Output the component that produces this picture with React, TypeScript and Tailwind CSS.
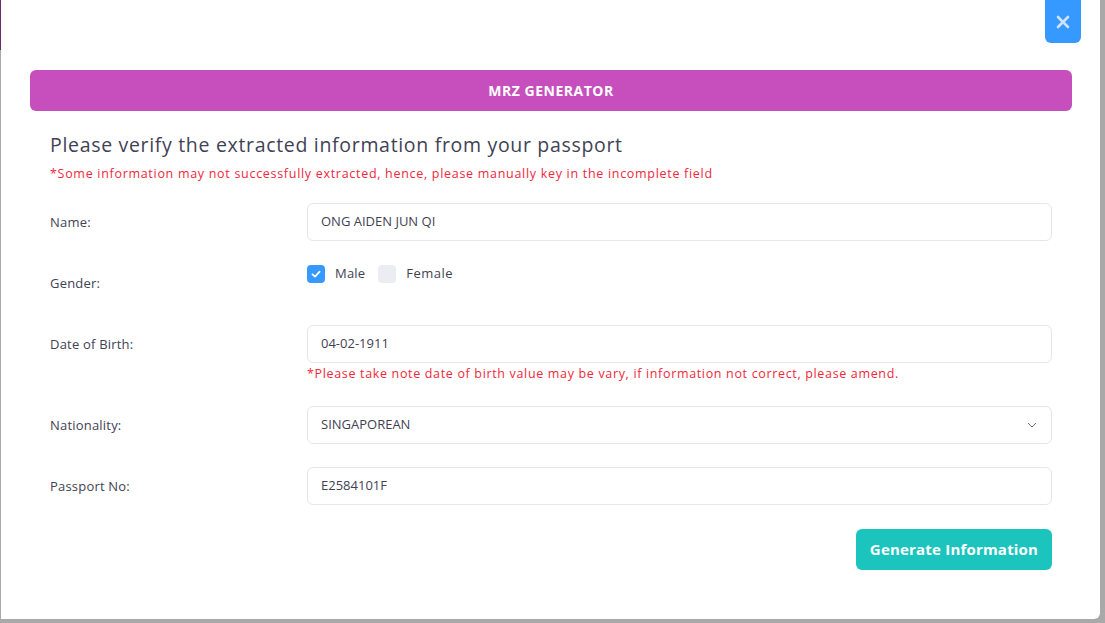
import React from 'react';

const FONT = { fontFamily: '"Open Sans", "Liberation Sans", sans-serif' };

const Row: React.FC<{ label: string; labelClass?: string; children: React.ReactNode }> = ({ label, labelClass, children }) => (
  <div className="flex">
    <div className={`w-[257px] shrink-0 text-[13px] text-[#3f4254] tracking-[0.2px] ${labelClass ?? ''}`}>{label}</div>
    <div className="flex-1">{children}</div>
  </div>
);

const Field: React.FC<{ value: string }> = ({ value }) => (
  <div className="h-[38px] border border-[#e4e6ef] rounded-md flex items-center px-[13px] text-[13px] text-[#3f4254]">
    {value}
  </div>
);

export default function App() {
  return (
    <div className="w-[1105px] h-[623px] bg-[#a9a9a9] relative overflow-hidden" style={FONT}>
      <div className="absolute left-0 top-0 w-[2px] h-[50px] bg-[#6b2a64]" />
      <div className="absolute left-[1px] top-0 w-[1099px] h-[619px] bg-white rounded-br-md">
        {/* close */}
        <button className="absolute left-[1044px] top-0 w-[36px] h-[43px] bg-[#3699ff] rounded-b-md flex items-center justify-center">
          <svg width="14" height="14" viewBox="0 0 14 14">
            <path d="M2 2 L12 12 M12 2 L2 12" stroke="#cfe3ff" strokeWidth="2.6" strokeLinecap="round" />
          </svg>
        </button>

        <div className="pt-[70px] pl-[29px] pr-[28px]">
          <div className="h-[41px] bg-[#c64fbd] rounded-md flex items-center justify-center text-white text-[14px] font-bold tracking-[0.5px]">
            MRZ GENERATOR
          </div>

          <div className="pl-[20px] pr-[20px]">
            <h1 className="mt-[20px] text-[19.5px] leading-[28px] text-[#3f4254] tracking-[0.68px]">
              Please verify the extracted information from your passport
            </h1>
            <p className="mt-[6px] text-[12.5px] leading-[18px] text-[#f0283c] tracking-[0.7px]">
              *Some information may not successfully extracted, hence, please manually key in the incomplete field
            </p>

            <div className="mt-[20px] flex flex-col">
              <Row label="Name:" labelClass="pt-[10px]">
                <Field value="ONG AIDEN JUN QI" />
              </Row>

              <Row label="Gender:" labelClass="pt-[33px]">
                <div className="pt-[23px] flex h-[84px] items-start">
                  <label className="flex items-center gap-[10px] text-[13px] text-[#3f4254] tracking-[0.2px]">
                    <span className="w-[18px] h-[18px] rounded-[4px] bg-[#3699ff] flex items-center justify-center">
                      <svg width="12" height="12" viewBox="0 0 12 12">
                        <path d="M2.5 6.3 L5 8.6 L9.6 3.6" fill="none" stroke="white" strokeWidth="1.8" strokeLinecap="round" strokeLinejoin="round" />
                      </svg>
                    </span>
                    Male
                  </label>
                  <label className="ml-[13px] flex items-center gap-[10px] text-[13px] text-[#3f4254] tracking-[0.5px]">
                    <span className="w-[18px] h-[18px] rounded-[4px] bg-[#ebedf3]" />
                    Female
                  </label>
                </div>
              </Row>

              <Row label="Date of Birth:" labelClass="pt-[10px]">
                <Field value="04-02-1911" />
                <p className="mt-[2px] text-[12.5px] leading-[18px] text-[#f0283c] tracking-[0.66px]">
                  *Please take note date of birth value may be vary, if information not correct, please amend.
                </p>
              </Row>

              <div className="mt-[23px]">
                <Row label="Nationality:" labelClass="pt-[10px]">
                  <div className="h-[38px] border border-[#e4e6ef] rounded-md flex items-center justify-between pl-[13px] pr-[14px] text-[13px] text-[#3f4254]">
                    SINGAPOREAN
                    <svg width="10" height="6" viewBox="0 0 10 6">
                      <path d="M1 1 L5 5 L9 1" fill="none" stroke="#6b6f80" strokeWidth="1" />
                    </svg>
                  </div>
                </Row>
              </div>

              <div className="mt-[23px]">
                <Row label="Passport No:" labelClass="pt-[10px]">
                  <Field value="E2584101F" />
                </Row>
              </div>

              <div className="mt-[24px] flex justify-end">
                <button className="w-[196px] h-[41px] bg-[#1bc5bd] rounded-md text-white text-[15px] font-bold tracking-[0.2px]">
                  Generate Information
                </button>
              </div>
            </div>
          </div>
        </div>
      </div>
    </div>
  );
}
